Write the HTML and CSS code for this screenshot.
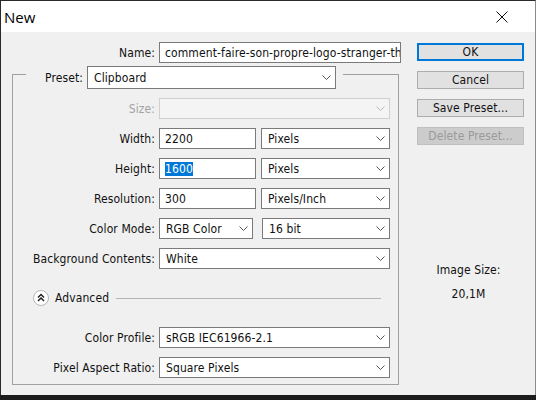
FILE: index.html
```html
<!DOCTYPE html>
<html>
<head>
<meta charset="utf-8">
<link rel="stylesheet" href="styles.css">
</head>
<body>
<div class="window">
  <div class="titlebar">
    <span class="title">New</span>
    <svg class="close" width="12" height="12" viewBox="0 0 12 12"><path d="M0.5 0.5 L11.5 11.5 M11.5 0.5 L0.5 11.5" stroke="#111" stroke-width="1" fill="none"/></svg>
  </div>
  <div class="body">
    <div class="main">
      <div class="row name-row">
        <span class="lbl name-lbl">Name:</span>
        <div class="input w-name"><span class="txt">comment-faire-son-propre-logo-stranger-th</span></div>
      </div>
      <fieldset class="group">
        <legend class="legend">
          <div class="legend-inner">
            <span class="lbl legend-lbl">Preset:</span>
            <div class="select w-preset"><span class="txt">Clipboard</span><svg class="chev" width="9" height="5" viewBox="0 0 9 5"><polyline points="0.5,0.5 4.5,4.5 8.5,0.5" fill="none" stroke="#555" stroke-width="1"/></svg></div>
          </div>
        </legend>

        <div class="row">
          <span class="lbl disabled-txt">Size:</span>
          <div class="select disabled w-full"><span class="txt"></span><svg class="chev" width="9" height="5" viewBox="0 0 9 5"><polyline points="0.5,0.5 4.5,4.5 8.5,0.5" fill="none" stroke="#b8b8b8" stroke-width="1"/></svg></div>
        </div>

        <div class="row">
          <span class="lbl">Width:</span>
          <div class="input w-num"><span class="txt">2200</span></div>
          <div class="select w-unit"><span class="txt">Pixels</span><svg class="chev" width="9" height="5" viewBox="0 0 9 5"><polyline points="0.5,0.5 4.5,4.5 8.5,0.5" fill="none" stroke="#555" stroke-width="1"/></svg></div>
        </div>

        <div class="row">
          <span class="lbl">Height:</span>
          <div class="input w-num"><span class="txt"><span class="sel">1600</span></span></div>
          <div class="select w-unit"><span class="txt">Pixels</span><svg class="chev" width="9" height="5" viewBox="0 0 9 5"><polyline points="0.5,0.5 4.5,4.5 8.5,0.5" fill="none" stroke="#555" stroke-width="1"/></svg></div>
        </div>

        <div class="row">
          <span class="lbl">Resolution:</span>
          <div class="input w-num"><span class="txt">300</span></div>
          <div class="select w-unit"><span class="txt">Pixels/Inch</span><svg class="chev" width="9" height="5" viewBox="0 0 9 5"><polyline points="0.5,0.5 4.5,4.5 8.5,0.5" fill="none" stroke="#555" stroke-width="1"/></svg></div>
        </div>

        <div class="row">
          <span class="lbl">Color Mode:</span>
          <div class="select w-mode"><span class="txt">RGB Color</span><svg class="chev" width="9" height="5" viewBox="0 0 9 5"><polyline points="0.5,0.5 4.5,4.5 8.5,0.5" fill="none" stroke="#555" stroke-width="1"/></svg></div>
          <div class="select w-bit"><span class="txt">16 bit</span><svg class="chev" width="9" height="5" viewBox="0 0 9 5"><polyline points="0.5,0.5 4.5,4.5 8.5,0.5" fill="none" stroke="#555" stroke-width="1"/></svg></div>
        </div>

        <div class="row">
          <span class="lbl">Background Contents:</span>
          <div class="select w-full"><span class="txt">White</span><svg class="chev" width="9" height="5" viewBox="0 0 9 5"><polyline points="0.5,0.5 4.5,4.5 8.5,0.5" fill="none" stroke="#555" stroke-width="1"/></svg></div>
        </div>

        <div class="advanced">
          <svg class="adv-icon" width="16" height="16" viewBox="0 0 16 16">
            <circle cx="8" cy="8" r="7.5" fill="#fff" stroke="#b5b5b5" stroke-width="1"/>
            <polyline points="5,7.5 8,4.5 11,7.5" fill="none" stroke="#222" stroke-width="1.5"/>
            <polyline points="5,11 8,8 11,11" fill="none" stroke="#222" stroke-width="1.5"/>
          </svg>
          <span class="adv-txt">Advanced</span>
          <span class="adv-line"></span>
        </div>

        <div class="row profile-row">
          <span class="lbl">Color Profile:</span>
          <div class="select w-full"><span class="txt">sRGB IEC61966-2.1</span><svg class="chev" width="9" height="5" viewBox="0 0 9 5"><polyline points="0.5,0.5 4.5,4.5 8.5,0.5" fill="none" stroke="#555" stroke-width="1"/></svg></div>
        </div>

        <div class="row">
          <span class="lbl">Pixel Aspect Ratio:</span>
          <div class="select w-full"><span class="txt">Square Pixels</span><svg class="chev" width="9" height="5" viewBox="0 0 9 5"><polyline points="0.5,0.5 4.5,4.5 8.5,0.5" fill="none" stroke="#555" stroke-width="1"/></svg></div>
        </div>
      </fieldset>
    </div>

    <div class="side">
      <div class="btn btn-default">OK</div>
      <div class="btn">Cancel</div>
      <div class="btn">Save Preset...</div>
      <div class="btn btn-disabled">Delete Preset...</div>
      <div class="imgsize">
        <div class="imgsize-lbl">Image Size:</div>
        <div class="imgsize-val">20,1M</div>
      </div>
    </div>
  </div>
</div>
</body>
</html>
```

FILE: styles.css
```css
html, body {
  margin: 0;
  padding: 0;
  background: #1c1c1c;
}

.window {
  box-sizing: border-box;
  width: 536px;
  height: 395px;
  border-top: 1px solid #2a2a2a;
  border-left: 1px solid #2a2a2a;
  border-right: 1px solid #8a8a8a;
  background: #f0f0f0;
  font-family: "DejaVu Sans Condensed", "DejaVu Sans", sans-serif;
  font-size: 12px;
  letter-spacing: 0.1px;
  color: #111;
  display: flex;
  flex-direction: column;
  overflow: hidden;
}

.titlebar {
  height: 31px;
  background: #fff;
  display: flex;
  align-items: center;
  flex-shrink: 0;
}

.title {
  font-family: "Open Sans", "Noto Sans", sans-serif;
  font-size: 15px;
  letter-spacing: 0;
  color: #000;
  padding-left: 3px;
  flex: 1;
}

.close {
  margin-right: 27px;
  margin-top: 1px;
}

.body {
  flex: 1;
  display: flex;
}

.main {
  width: 400px;
  padding-top: 10px;
}

.row {
  display: flex;
  align-items: center;
  height: 21px;
}

.row + .row {
  margin-top: 9px;
}

.lbl {
  width: 142px;
  margin-right: 4px;
  text-align: right;
  white-space: nowrap;
  flex-shrink: 0;
}

.name-lbl {
  width: 154px;
}

.disabled-txt {
  color: #a3a3a3;
}

.input,
.select {
  box-sizing: border-box;
  height: 21px;
  background: #fff;
  border: 1px solid #7a7a7a;
  display: flex;
  align-items: center;
  overflow: hidden;
  flex-shrink: 0;
}

.input .txt {
  padding-left: 5px;
  white-space: nowrap;
}

.select .txt {
  padding-left: 6px;
  flex: 1;
  white-space: nowrap;
}

.chev {
  margin-right: 4px;
  flex-shrink: 0;
}

.select.disabled {
  background: #f4f4f4;
  border-color: #d0d0d0;
}

.sel {
  background: #0078d7;
  color: #fff;
}

.w-name { width: 242px; }
.w-preset { width: 249px; height: 23px; }
.w-full { width: 231px; }
.w-num { width: 97px; margin-right: 5px; }
.w-unit { width: 129px; }
.w-mode { width: 94px; margin-right: 9px; }
.w-bit { width: 128px; }

.group {
  box-sizing: border-box;
  width: 387px;
  margin: -4px 0 0 11px;
  padding: 9px 0 6px 0;
  border: 1px solid #a0a0a0;
  min-width: 0;
}

.legend {
  margin-left: 13px;
  padding: 0;
}

.legend-inner {
  display: flex;
  align-items: center;
  padding-top: 7px;
  padding-right: 7px;
}

.legend-lbl {
  width: 57px;
}

.advanced {
  display: flex;
  align-items: center;
  height: 16px;
  margin-top: 21px;
  padding-left: 20px;
  padding-right: 17px;
}

.adv-icon {
  flex-shrink: 0;
}

.adv-txt {
  margin-left: 6px;
  margin-right: 7px;
}

.adv-line {
  flex: 1;
  height: 1px;
  background: #b4b4b4;
}

.profile-row {
  margin-top: 21px;
}

.side {
  width: 107px;
  margin-left: 16px;
  padding-top: 11px;
  display: flex;
  flex-direction: column;
}

.btn {
  box-sizing: border-box;
  height: 18px;
  background: #e1e1e1;
  border: 1px solid #adadad;
  display: flex;
  align-items: center;
  justify-content: center;
  margin-bottom: 10px;
}

.btn-default {
  border: 2px solid #0078d7;
}

.btn-disabled {
  background: #cccccc;
  border-color: #bfbfbf;
  color: #9a9a9a;
}

.imgsize {
  margin-top: 108px;
  text-align: center;
  padding-right: 4px;
}

.imgsize-lbl {
  line-height: 14px;
}

.imgsize-val {
  line-height: 14px;
  margin-top: 10px;
}
```
